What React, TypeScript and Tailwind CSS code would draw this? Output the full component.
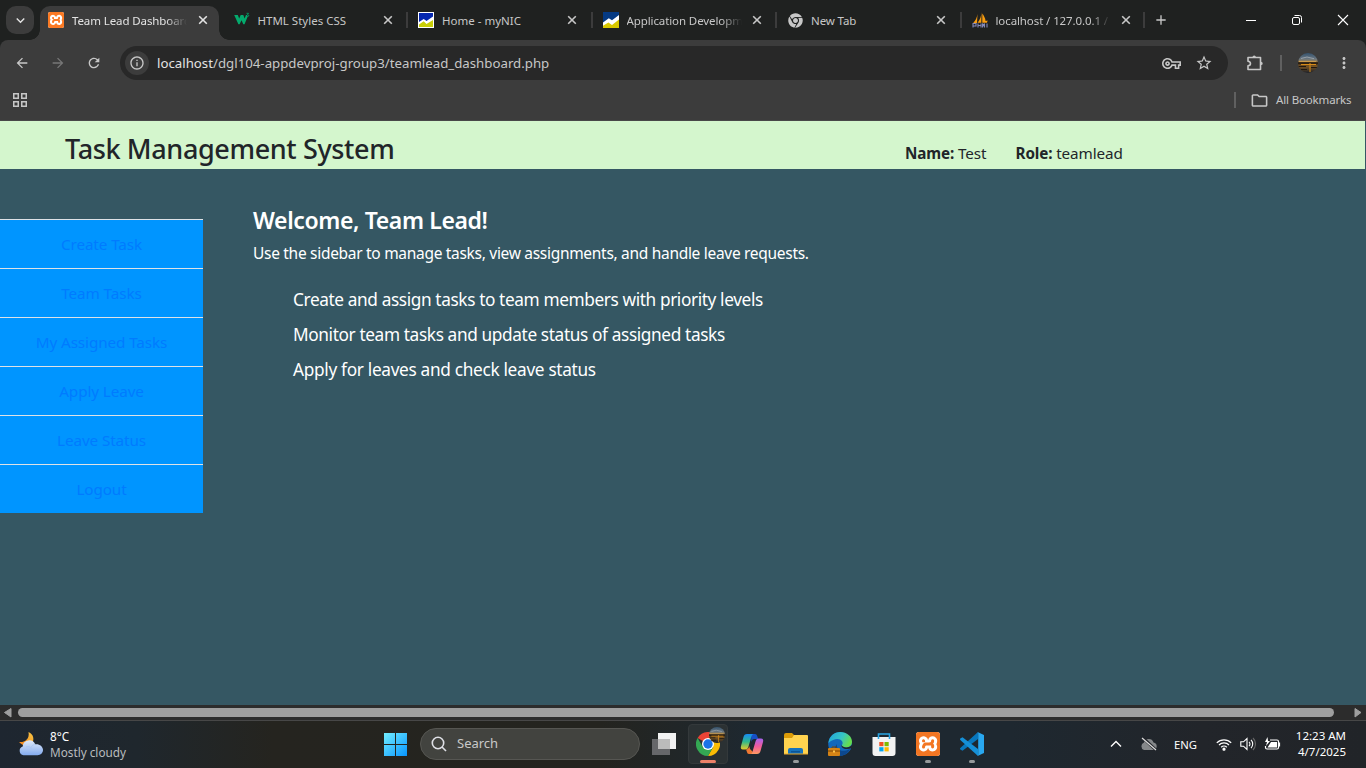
import type { ReactNode } from "react";
import {
  MdArrowBack,
  MdArrowForward,
  MdRefresh,
  MdInfoOutline,
  MdStarBorder,
  MdMoreVert,
  MdAdd,
  MdKeyboardArrowDown,
  MdOutlineFolder,
  MdOutlineVpnKey,
} from "react-icons/md";
import { FaChrome } from "react-icons/fa";
import { SiXampp } from "react-icons/si";

function Xampp({ size }: { size: "sm" | "lg" }) {
  return (
    <span className={size === "sm" ? "block h-4 w-4 overflow-hidden rounded-[2px] bg-white text-[#fb7a24]" : "block h-6 w-6 overflow-hidden rounded-[3px] bg-white text-[#f37623]"}>
      <SiXampp className="h-full w-full scale-[1.04]" />
    </span>
  );
}

function W3() {
  return (
    <svg viewBox="0 0 16 16" className="h-4 w-4">
      <path fill="#04aa6d" d="M.2 3h3.600l1.400 3.600L6.700 3h2.600l1.300 3.600L12 3h1.200l.3 2-3 7.200H9.300L7.500 8.200l-1.900 4H4.400z" />
      <path d="M12.500 1.300h2l-1 1.400c2 0 1.500 2.500-.8 1.700" strokeWidth=".8" fill="none" stroke="#04aa6d" />
    </svg>
  );
}

function Nic({ framed }: { framed?: boolean }) {
  return (
    <svg viewBox="0 0 16 16" className="h-4 w-4">
      <path fill="#fff" d="M0 0h16v16H0z" />
      {framed ? (
        <>
          <path fill="#0527b0" d="M1 1h14v3.500L8.500 9 5.700 7 1 10z" />
          <path fill="#c9cf08" d="M1 14V12.600l4.700-3.300L8.500 12 15 8V15H1z" />
        </>
      ) : (
        <>
          <path fill="#053a83" d="M0 0h16v3L9 8.300 5.800 6.300 0 10.500z" />
          <path fill="#d8c800" d="M0 13.800l5.400-3.400L9 13 16 7.500V16H0z" />
        </>
      )}
    </svg>
  );
}

function Sails() {
  return (
    <svg viewBox="0 0 16 16" className="h-4 w-4">
      <path fill="#f89c0e" d="M5.5 2 5 11H1.200C3.500 8.500 5 5.500 5.500 2zM9.500 0 9.300 10.800H5.600C8.200 7.500 9.200 4 9.500 0zM10.300 1.500c1.500 2 3 4.500 3.300 7.500l2-.6-.6 2.400h-4.700z" />
      <path d="M1 15.500v-4h3v2.500H1M6 15.500v-4M6 13.500h3M9 15.500v-4M10.500 15.500v-4l1 2 1-2v4M15 15.500v-4" fill="none" stroke="#8489b8" strokeWidth="1.100" />
    </svg>
  );
}

function Sunset({ id, className }: { id: string; className: string }) {
  return (
    <svg viewBox="0 0 20 20" className={className}>
      <defs>
        <linearGradient id={id} x1="0" x2="0" y1="0" y2="1">
          <stop offset="0" stopColor="#35536e" />
          <stop offset=".3" stopColor="#6a7680" />
          <stop offset=".42" stopColor="#9a7f50" />
          <stop offset=".5" stopColor="#2a1c10" />
          <stop offset=".65" stopColor="#7d5723" />
          <stop offset="1" stopColor="#1c2029" />
        </linearGradient>
        <clipPath id={`${id}-clip`}>
          <circle cx="10" cy="10" r="10" />
        </clipPath>
      </defs>
      <g clipPath={`url(#${id}-clip)`}>
        <path d="M0 0h20v20H0z" fill={`url(#${id})`} />
        <path d="M3 5.500l6-1.500 7 1.700" stroke="#9ea6ad" strokeWidth=".9" fill="none" />
        <path d="M1 8.500h17" stroke="#d9a34b" strokeWidth=".8" />
        <path d="M0 10h20" stroke="#20180f" strokeWidth="1.200" />
        <path d="M3 11.500h15M12 10v9" stroke="#d68b19" strokeWidth="1" />
        <path d="M0 13.500h8M13 14.500h7M3 16.500h6" stroke="#20180f" strokeWidth="1.100" />
      </g>
    </svg>
  );
}

const tabs: { title: string; icon: ReactNode; cls: string; fade?: boolean }[] = [
  { title: "Team Lead Dashboard", icon: <Xampp size="sm" />, cls: "tracking-[-0.1px]", fade: true },
  { title: "HTML Styles CSS", icon: <W3 />, cls: "tracking-[0px]" },
  { title: "Home - myNIC", icon: <Nic framed />, cls: "tracking-[0px]" },
  { title: "Application Development", icon: <Nic />, cls: "tracking-[-0.1px]", fade: true },
  { title: "New Tab", icon: <FaChrome className="h-[15px] w-[15px] text-[#c7c7c7]" />, cls: "tracking-[-0.1px]" },
  { title: "localhost / 127.0.0.1 / tms", icon: <Sails />, cls: "tracking-[-0.1px]", fade: true },
];

function TabStrip() {
  return (
    <div className="flex h-10 bg-[#1f2120] text-[#c7c7c7]">
      <div className="flex h-10 w-10 shrink-0 items-center pl-[6px]">
        <div className="flex h-7 w-7 items-center justify-center rounded-[10px] bg-[#3c3c3c] text-[#e3e3e3]">
          <MdKeyboardArrowDown className="h-[17px] w-[17px]" />
        </div>
      </div>
      {tabs.map((t, i) => (
        <div key={t.title} className="relative flex h-10 w-[184.500px] shrink-0 items-end">
          {i > 1 && <span className="absolute -left-[3px] top-3 h-4 w-[2px] bg-[#3c3c3c]" />}
          {i === 0 && (
            <>
              <span className="absolute -left-[10px] bottom-0 h-[10px] w-[10px] bg-[radial-gradient(circle_at_0_0,transparent_9.500px,#3c3c3c_10px)]" />
              <span className="absolute left-[179px] bottom-0 h-[10px] w-[10px] bg-[radial-gradient(circle_at_100%_0,transparent_9.500px,#3c3c3c_10px)]" />
            </>
          )}
          <div className={i === 0 ? "flex h-[34px] w-[179px] items-center rounded-t-[10px] bg-[#3c3c3c] pb-[6px] pl-2 text-[#e3e3e3]" : "flex h-[34px] w-[179px] items-center pb-[6px] pl-[9px]"}>
            <span className="flex h-4 w-4 shrink-0 items-center justify-center">{t.icon}</span>
            <span className={`ml-2 w-[115px] shrink-0 overflow-hidden whitespace-nowrap pt-px text-[11.500px] leading-4 ${t.cls} ${t.fade ? "[mask-image:linear-gradient(to_right,black_82%,transparent)]" : ""}`}>{t.title}</span>
            <svg viewBox="0 0 12 12" className={i === 0 ? "ml-[10px] h-3 w-3 shrink-0" : "ml-[9px] h-3 w-3 shrink-0"} fill="none" stroke="currentColor" strokeWidth="1.600">
              <path d="M2.200 2.200l7.600 7.600M9.800 2.200 2.200 9.800" />
            </svg>
          </div>
        </div>
      ))}
      <div className="relative flex h-10 w-[28px] items-center justify-center">
        <span className="absolute -left-[4px] top-3 h-4 w-[2px] bg-[#3c3c3c]" />
        <MdAdd className="h-4 w-4" />
      </div>
      <div className="ml-auto flex h-10 w-[138px] items-center text-white">
        <div className="flex w-[46px] justify-center"><span className="h-px w-[10px] bg-white" /></div>
        <svg viewBox="0 0 46 12" className="h-3 w-[46px]" fill="none" stroke="currentColor">
          <rect x="18.500" y="3.500" width="7" height="7" rx="1.500" />
          <path d="M20.500 1.500H25.500a2 2 0 0 1 2 2V8.500" />
        </svg>
        <svg viewBox="0 0 46 12" className="h-3 w-[46px]" fill="none" stroke="currentColor" strokeWidth="1.100">
          <path d="M18 1l10 10M28 1 18 11" />
        </svg>
      </div>
    </div>
  );
}

function Toolbar() {
  return (
    <div className="bg-[#1f2120]">
      <div className="h-[81px] rounded-t-[8px] border-b border-[#484848] bg-[#3c3c3c] text-[#c7c7c7]">
        <div className="flex h-[46px] items-center">
          <MdArrowBack className="ml-[14px] h-4 w-4" />
          <MdArrowForward className="ml-5 h-4 w-4 text-[#777]" />
          <MdRefresh className="ml-5 h-4 w-4" />
          <div className="ml-[18px] flex h-[34px] w-[1108px] items-center rounded-full bg-[#282828]">
            <span className="ml-[5px] flex h-6 w-6 items-center justify-center rounded-full bg-[#3c3c3c]">
              <MdInfoOutline className="h-4 w-4" />
            </span>
            <span className="ml-2 whitespace-nowrap pt-[2px] text-[13.250px]">
              <span className="text-[#e3e3e3]">localhost</span>/dgl104-appdevproj-group3/teamlead_dashboard.php
            </span>
            <MdOutlineVpnKey className="ml-auto h-[19px] w-[19px]" />
            <MdStarBorder className="ml-[14px] mr-[15px] h-[18px] w-[18px]" />
          </div>
          <svg viewBox="0 0 18 18" className="ml-[18px] h-[18px] w-[18px]" fill="none" stroke="currentColor" strokeWidth="1.600">
            <path d="M2 3.500h12.500v12H2v-3.700c3.300-.4 3.300-4.200 0-4.600z" strokeLinejoin="round" />
            <path d="M6.500 3.200a1.700 1.700 0 0 1 3.400 0M15 7.700a1.700 1.700 0 0 1 0 3.400" fill="currentColor" stroke="none" />
          </svg>
          <span className="ml-4 h-4 w-[2px] bg-[#606060]" />
          <Sunset id="avatar" className="ml-4 h-5 w-5" />
          <MdMoreVert className="ml-[17px] h-[18px] w-[18px]" />
        </div>
        <div className="flex h-[28px] items-center">
          <svg viewBox="0 0 14 14" className="ml-[13px] h-[14px] w-[14px]" fill="none" stroke="currentColor" strokeWidth="1.500">
            <path d="M.75.75h4.500v4.500H.75zM8.750.75h4.500v4.500h-4.500zM.75 8.750h4.500v4.500H.75zM8.750 8.750h4.500v4.500h-4.500z" />
          </svg>
          <span className="ml-auto h-4 w-[2px] bg-[#606060]" />
          <MdOutlineFolder className="ml-[14px] h-[19px] w-[19px]" />
          <span className="ml-[7px] mr-[14px] w-[76px] whitespace-nowrap text-[11.500px] tracking-[-0.15px]">All Bookmarks</span>
        </div>
      </div>
    </div>
  );
}

const links = ["Create Task", "Team Tasks", "My Assigned Tasks", "Apply Leave", "Leave Status", "Logout"];
const duties: [string, string][] = [
  ["Create and assign tasks to team members with priority levels", "tracking-[-0.39px]"],
  ["Monitor team tasks and update status of assigned tasks", "tracking-[-0.38px]"],
  ["Apply for leaves and check leave status", "tracking-[-0.32px]"],
];

function Dashboard() {
  return (
    <div className="h-[584px] bg-[#355763]">
      <header className="flex h-12 w-[1365px] items-start bg-[#d4f6cd] text-[#212529]">
        <h1 className="ml-[65px] mt-[10px] w-[840px] whitespace-nowrap text-[27px] font-medium leading-9 tracking-[-0.37px]">Task Management System</h1>
        <p className="mt-5 w-[110.500px] whitespace-nowrap text-[15.250px] leading-6 tracking-[-0.12px]"><b>Name:</b> Test</p>
        <p className="mt-5 whitespace-nowrap text-[15.250px] leading-6 tracking-[-0.12px]"><b>Role:</b> teamlead</p>
      </header>
      <div className="flex">
        <nav className="mt-[50px] w-[203px] shrink-0 bg-[#0095ff] text-[#007bff]">
          {links.map((l) => (
            <a key={l} className="flex h-[49px] items-center justify-center border-t border-[#dee2e6] text-[15.250px] tracking-[-0.1px]">{l}</a>
          ))}
        </nav>
        <main className="ml-[50px] text-white">
          <h2 className="mt-9 whitespace-nowrap text-[23px] font-semibold leading-[30px] tracking-[-0.38px]">Welcome, Team Lead!</h2>
          <p className="mt-[6px] whitespace-nowrap text-[15.500px] leading-6 tracking-[-0.3px]">Use the sidebar to manage tasks, view assignments, and handle leave requests.</p>
          <ul className="ml-10 mt-4 pt-[1px]">
            {duties.map(([d, c]) => (
              <li key={d} className={`h-[35px] whitespace-nowrap text-[17.250px] leading-[35px] ${c}`}>{d}</li>
            ))}
          </ul>
        </main>
      </div>
    </div>
  );
}

function ScrollBar() {
  return (
    <div className="flex h-[15px] items-center bg-[#2c2c2c]">
      <svg viewBox="0 0 18 15" className="h-[15px] w-[18px]" fill="#9f9f9f"><path d="M4.500 7.500 11 3.500v8.500z" strokeLinejoin="round" stroke="#9f9f9f" /></svg>
      <span className="h-[9px] w-[1316px] rounded-full bg-[#9f9f9f]" />
      <svg viewBox="0 0 32 15" className="h-[15px] w-8" fill="#9f9f9f"><path d="M27 7.500 21 3.500v8.500z" strokeLinejoin="round" stroke="#9f9f9f" /></svg>
    </div>
  );
}

function Weather() {
  return (
    <svg viewBox="0 0 26 26" className="h-[26px] w-[26px]">
      <defs>
        <linearGradient id="cloud" x1="0" x2="0" y1="0" y2="1"><stop stopColor="#e0ebfb" /><stop offset="1" stopColor="#83abef" /></linearGradient>
        <linearGradient id="moon" x1="1" x2="0" y1="0" y2="1"><stop stopColor="#f8c846" /><stop offset="1" stopColor="#f47f16" /></linearGradient>
      </defs>
      <path fill="url(#moon)" d="M10.500 1c5 2 6.500 8 3 12-3 3-8 2.500-12.500-2 5 .8 11-2.500 9.500-10z" />
      <path fill="url(#cloud)" d="M5.500 24.200a4.500 4.500 0 0 1-.8-8.700 6.500 6.500 0 0 1 12.500-2.200c3.600-.8 7.800 1.800 7.800 5.500 0 3.200-2.300 5.400-5.500 5.400z" />
      <path d="M8 16c4-1.500 6 2 7 3.500M12 19c1-4 3-5.500 5.300-5.700" stroke="#a8c4f2" strokeWidth=".8" fill="none" />
    </svg>
  );
}

function ChromeLogo() {
  return (
    <svg viewBox="0 0 24 24" className="h-6 w-6">
      <path fill="#ea4335" d="M12 12 1.600 6a12 12 0 0 1 20.800 0z" />
      <path fill="#fbbc04" d="M12 12V6h10.400A12 12 0 0 1 12 24l5.200-9z" />
      <path fill="#34a853" d="M1.600 6A12 12 0 0 0 12 24l5.200-9L12 17 6.800 15z" />
      <circle cx="12" cy="12" r="6" fill="#fff" />
      <circle cx="12" cy="12" r="4.700" fill="#1a73e8" />
    </svg>
  );
}

function Copilot() {
  return (
    <svg viewBox="0 0 24 24" className="h-6 w-6">
      <defs>
        <linearGradient id="cpa" x1="0" x2="0" y1="0" y2="1"><stop stopColor="#178af5" /><stop offset=".5" stopColor="#30b88c" /><stop offset="1" stopColor="#e8ca28" /></linearGradient>
        <linearGradient id="cpb" x1="0" x2="0" y1="0" y2="1"><stop stopColor="#a563ef" /><stop offset=".5" stopColor="#f05a9c" /><stop offset="1" stopColor="#ff9a62" /></linearGradient>
      </defs>
      <path fill="#164fc5" d="M11 2h4c1.300 0 1.800.8 2.200 2l1 3h-4c-1.800 0-2.200 1-2.800 3z" />
      <path fill="url(#cpa)" d="M7 2h6.500c-1.500.5-2 2-2.500 4L8.500 14.500C8 16.500 7 17.500 5.500 17.500H3C.8 17.500.5 16 1 14L3.500 5C4 3 5 2 7 2z" />
      <path fill="#f07832" d="M6 17.500c1.800 0 2.800-1.500 3.300-3.300L10 17l3 3-1.500 2H9c-1.300 0-1.800-1-2-2z" />
      <path fill="url(#cpb)" d="M17 22h-6.500c1.500-.5 2-2 2.500-4l2.500-8.500c.5-2 1.500-3 3-3H21c2.200 0 2.500 1.500 2 3.500L20.500 19c-.5 2-1.500 3-3.500 3z" />
    </svg>
  );
}

function Explorer() {
  return (
    <svg viewBox="0 0 24 24" className="h-6 w-6">
      <path fill="#dc9b07" d="M0 3a2 2 0 0 1 2-2h6l2 2v5H0z" />
      <path fill="#ffd34f" d="M0 6h8l2-3h13a1 1 0 0 1 1 1v18H0z" />
      <path fill="#1673bd" d="M4 22v-4a2 2 0 0 1 2-2h11a2 2 0 0 1 2 2v4z" />
      <path fill="#0b5596" d="M7 19h9v1.500H7z" />
      <path fill="#e9a92b" d="M0 21.500h24v1H0z" />
    </svg>
  );
}

function Edge() {
  return (
    <svg viewBox="0 0 24 24" className="h-6 w-6">
      <defs>
        <linearGradient id="ed" x1="0" x2="1" y1="0" y2=".4"><stop stopColor="#20a3dc" /><stop offset=".6" stopColor="#36c5c5" /><stop offset="1" stopColor="#65dc50" /></linearGradient>
      </defs>
      <circle cx="12" cy="12" r="11.800" fill="#1368bb" />
      <path fill="url(#ed)" d="M.5 11C1 4.500 6 0 12.300 0 19 0 24 4.500 24 9.800c0 3.700-2.700 5.700-6 5.700-4 0-4.800-1.500-4-2.500 3-4-4.500-10-13.500-2z" />
      <path fill="#20272d" d="M13.500 13c-.8 3 4 5.500 10.500 3v-3c-3 3.500-9 3-10.500 0z" />
      <path fill="#0c488f" d="M9 12c-1 6 5 9 13 5-2 5-7 7-10 7-5-1-7-7-3-12z" />
      <rect y="16" width="12" height="8" rx="1" fill="#d58315" />
      <path d="M4 16v-1h4v1M0 19h12" stroke="#7a4507" fill="none" />
      <path fill="#ffc34a" d="M5 18.500h2v2H5z" />
    </svg>
  );
}

function Store() {
  return (
    <svg viewBox="0 0 24 24" className="h-6 w-6">
      <path fill="#f2f2f2" d="M.5 5h23v16a3 3 0 0 1-3 3h-17a3 3 0 0 1-3-3z" />
      <path d="M6.500 7V2h11v5" fill="none" stroke="#2aa5e4" strokeWidth="1.600" />
      <path fill="#f25022" d="M7.300 10h4.200v4.200H7.300z" />
      <path fill="#7fba00" d="M12.500 10h4.200v4.200h-4.200z" />
      <path fill="#00a4ef" d="M7.300 15.200h4.200v4.200H7.300z" />
      <path fill="#ffb900" d="M12.500 15.200h4.200v4.200h-4.200z" />
    </svg>
  );
}

function Code() {
  return (
    <svg viewBox="0 0 24 24" className="h-6 w-6">
      <path fill="#0877bd" d="M18 0v7L2.500 18.700.3 17.500c-.4-.5-.4-1 0-1.400z" />
      <path fill="#1590d8" d="M18 24v-7L2.500 5.300.3 6.500c-.4.500-.4 1 0 1.400z" />
      <path fill="#29a8f0" d="M17.500 0 24 3v18l-6.500 3c.6-.7.7-1 .7-2V2c0-1-.1-1.300-.7-2z" />
    </svg>
  );
}

function TaskItem({ children, dot }: { children: ReactNode; dot?: boolean }) {
  return (
    <div className="relative flex h-[46px] w-11 items-center justify-center">
      {children}
      {dot && <span className="absolute bottom-[4px] h-[3px] w-[6px] rounded-full bg-[#979a9c]" />}
    </div>
  );
}

function Taskbar() {
  return (
    <div className="flex h-12 items-center border-t border-[#474747] bg-[linear-gradient(90deg,#1e2630_0%,#1f272d_10%,#25241f_20%,#24241f_44%,#1e2830_55%,#1e2830_74%,#22252a_88%,#212428_100%)] pb-px text-white">
      <div className="flex w-[373px] items-center pl-[18px]">
        <Weather />
        <div className="ml-[6px] text-[11.750px] leading-4">
          <p>8°C</p>
          <p className="text-[#b9bcbe]">Mostly cloudy</p>
        </div>
      </div>
      <TaskItem>
        <svg viewBox="0 0 23 23" className="mt-px h-[23px] w-[23px]">
          <defs><linearGradient id="win" x1="0" y1="0" x2="1" y2="1"><stop stopColor="#72edff" /><stop offset="1" stopColor="#0795ff" /></linearGradient></defs>
          <path fill="url(#win)" d="M0 0h11v11H0zM12 0h11v11H12zM0 12h11v11H0zM12 12h11v11H12z" />
        </svg>
      </TaskItem>
      <div className="ml-[3px] flex h-8 w-[220px] items-center rounded-full border border-[#565652] bg-[#42433f] pl-[10px]">
        <svg viewBox="0 0 16 16" className="h-4 w-4" fill="none" stroke="#dfe0e6" strokeWidth="1.600"><circle cx="7" cy="7" r="5.700" /><path d="M11 11l4 4" /></svg>
        <span className="ml-[10px] text-[13px] text-[#c9c9c8]">Search</span>
      </div>
      <div className="ml-[2px] flex">
        <TaskItem>
          <svg viewBox="0 0 24 24" className="h-6 w-6">
            <path fill="#f2f2f2" d="M6 1h18v16H6z" />
            <path fill="#66676a" d="M0 7h18v16H0z" />
            <path fill="#bbb" d="M6 7h12v10H6z" />
          </svg>
        </TaskItem>
        <TaskItem>
          <div className="relative flex h-10 w-10 items-center justify-center rounded-[4px] border border-[#34393b] bg-[#2b3133]">
            <ChromeLogo />
            <Sunset id="badge" className="absolute right-[2px] top-[2px] h-4 w-4" />
            <span className="absolute bottom-0 h-[3px] w-4 rounded-full bg-[#ee8169]" />
          </div>
        </TaskItem>
        <TaskItem><Copilot /></TaskItem>
        <TaskItem dot><Explorer /></TaskItem>
        <TaskItem><Edge /></TaskItem>
        <TaskItem><Store /></TaskItem>
        <TaskItem dot><Xampp size="lg" /></TaskItem>
        <TaskItem dot><Code /></TaskItem>
      </div>
      <div className="ml-auto flex items-center">
        <svg viewBox="0 0 12 8" className="h-2 w-3" fill="none" stroke="#fff" strokeWidth="1.400"><path d="M1 6.500l5-5 5 5" /></svg>
        <svg viewBox="0 0 17 14" className="ml-[18px] h-[14px] w-[17px]">
          <path fill="#85888a" d="M4 13a4 4 0 0 1 0-7.500 5 5 0 0 1 9.500 0A3.800 3.800 0 0 1 13.500 13z" />
          <path d="M3 1l13 12" stroke="#22252a" strokeWidth="3" /><path d="M2 1l14 12" stroke="#ddd" strokeWidth="1.200" />
        </svg>
        <span className="ml-[17px] w-[25px] whitespace-nowrap pt-[2px] text-[11.250px]">ENG</span>
        <svg viewBox="0 0 16 13" className="ml-[17px] h-[13px] w-4" fill="none" stroke="#fff" strokeWidth="1.200">
          <path d="M.8 4.800a10.200 10.200 0 0 1 14.400 0M3 7a7 7 0 0 1 10 0M5.200 9.200a4 4 0 0 1 5.600 0" /><circle cx="8" cy="11.200" r="1" fill="#fff" />
        </svg>
        <svg viewBox="0 0 16 14" className="ml-2 h-[14px] w-4" fill="none" stroke="#fff" strokeWidth="1.100">
          <path d="M.8 4.800h2.700L7 1.500v11L3.500 9.200H.8zM9 4.800a3 3 0 0 1 0 4.400M11 2.800a6 6 0 0 1 0 8.400" /><path d="M13 1a8.500 8.500 0 0 1 0 12" stroke="#666" />
        </svg>
        <svg viewBox="0 0 17 14" className="ml-2 h-[14px] w-[17px]" fill="none" stroke="#fff" strokeWidth="1.200">
          <path d="M6 3h7a1.500 1.500 0 0 1 1.500 1.500v6A1.500 1.500 0 0 1 13 12H3a1.500 1.500 0 0 1-1.500-1.500V9M15.500 5.500v4" />
          <path fill="#fff" stroke="none" d="M7 5h6v5.500H3.500zM3.500 0 1 5h2L2 9l4-5H4z" />
        </svg>
        <div className="ml-[14px] mr-5 w-[51px] text-right text-[11.500px] leading-4">
          <p className="whitespace-nowrap">12:23 AM</p>
          <p className="whitespace-nowrap">4/7/2025</p>
        </div>
      </div>
    </div>
  );
}

export default function App() {
  return (
    <div className="h-[768px] w-[1366px] overflow-hidden font-['Noto_Sans','Open_Sans',sans-serif]">
      <TabStrip />
      <Toolbar />
      <Dashboard />
      <ScrollBar />
      <Taskbar />
    </div>
  );
}
